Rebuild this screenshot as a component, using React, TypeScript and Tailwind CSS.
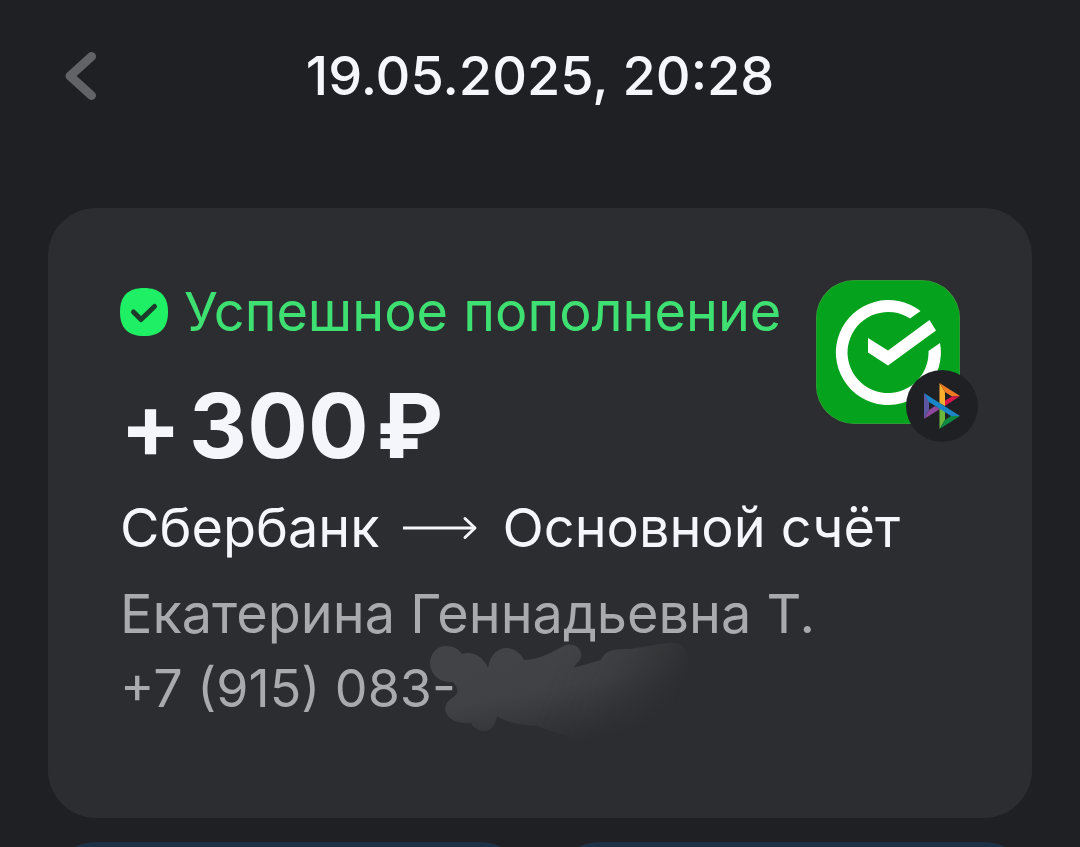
function BackIcon() {
  return (
    <svg className="h-12 w-8" viewBox="0 0 32 48" fill="none" aria-hidden="true">
      <path d="M27.5 4.5 L6 24 L27.5 43.5" stroke="#626367" strokeWidth="9" strokeLinecap="round" strokeLinejoin="round" />
    </svg>
  )
}

function SuccessIcon() {
  return (
    <svg className="size-12 shrink-0" viewBox="0 0 48 48" fill="none" aria-hidden="true">
      <path d="M24 0C40 0 48 8 48 24C48 40 40 48 24 48C8 48 0 40 0 24C0 8 8 0 24 0Z" fill="#1fef64" />
      <path d="M13.5 24 L21 31.5 L34.5 18.5" stroke="#1d3b2a" strokeWidth="5" strokeLinecap="round" strokeLinejoin="round" />
    </svg>
  )
}

function ArrowIcon() {
  return (
    <svg className="h-6 w-[75px] shrink-0" viewBox="0 0 75 24" fill="none" aria-label="на">
      <path d="M0 12 H72" stroke="#f5f6fb" strokeWidth="3" />
      <path d="M62 2.5 L72 12 L62 21.5" stroke="#f5f6fb" strokeWidth="3" strokeLinecap="round" strokeLinejoin="round" />
    </svg>
  )
}

function BankLogo() {
  return (
    <svg className="size-36" viewBox="0 0 144 144" fill="none" role="img" aria-label="Сбербанк">
      <rect width="144" height="144" rx="38" fill="#3c9a3c" />
      <rect x="0.7" y="0.7" width="142.6" height="142.6" rx="37.5" fill="#05a31d" />
      <path d="M104.5 31 A52.5 52.5 0 1 0 124 63 L112.5 71 A40.5 40.5 0 1 1 94 38.5 Z" fill="#fff" />
      <path d="M52 58 L72 70.5 L113.5 40 L120 50.5 L72 85.5 L52 72.5 Z" fill="#fff" />
    </svg>
  )
}

// Fast payments system badge
function SbpBadge() {
  return (
    <svg className="size-[72px]" viewBox="0 0 72 72" fill="none" role="img" aria-label="СБП">
      <circle cx="36" cy="36" r="36" fill="#1f2024" />
      <path d="M18 23 L23 31 V40 L18 49 Z" fill="#5b57a2" />
      <path d="M23 40 L29 36 L34 39 L18 49 Z" fill="#90489c" />
      <path d="M33.5 13 L39 22 V36 L33.5 33 Z" fill="#fbb02d" />
      <path d="M33.5 13 L54 26 L46 26.5 L39 22 Z" fill="#ef7b22" />
      <path d="M54 26 L39 36 V30.500 L46 26.5 Z" fill="#d9174a" />
      <path d="M39 38 V50 L33.5 59 V34 Z" fill="#6cb83f" />
      <path d="M39 50 L45 46 H54 L33.5 59 Z" fill="#0d8a43" />
      <path d="M18 23 L54 46 H45 L23 32 Z" fill="#1b86c7" />
    </svg>
  )
}

function MarkerSmudge() {
  return (
    <svg className="absolute -top-2.5 left-[308px] h-[106px] w-[264px]" viewBox="0 0 264 106" fill="none" aria-hidden="true">
      <defs>
        <linearGradient id="smudge" x1="110" y1="10" x2="130" y2="106" gradientUnits="userSpaceOnUse">
          <stop offset="0" stopColor="#424346" />
          <stop offset="0.4" stopColor="#404144" />
          <stop offset="1" stopColor="#2c2d30" />
        </linearGradient>
        <linearGradient id="smudge-fade" x1="130" y1="20" x2="245" y2="70" gradientUnits="userSpaceOnUse">
          <stop offset="0" stopColor="#fff" />
          <stop offset="0.4" stopColor="#ddd" />
          <stop offset="0.8" stopColor="#555" />
          <stop offset="1" stopColor="#000" />
        </linearGradient>
        <mask id="smudge-mask">
          <rect width="264" height="106" fill="url(#smudge-fade)" />
        </mask>
      </defs>
      <path
        d="M18 5C25 5 31 8 34 13C46 9 56 17 60 27C64 2 88 2 96 19C112 19 125 10 138 4C150 1 158 13 150 21L145 27L173 19C178 8 188 8 202 8L238 2C252 -1 262 8 260 20C265 26 264 34 262 42C255 70 225 95 195 105C165 102 135 96 110 85C96 84 80 83 69 75C66 96 48 92 43 82C18 84 10 66 24 57C31 53 31 48 25 41C10 42 2 32 2 21C3 12 9 5 18 5Z"
        fill="url(#smudge)"
        mask="url(#smudge-mask)"
      />
    </svg>
  )
}

export default function App() {
  return (
    <div className="h-screen overflow-hidden bg-[#1f2024] px-12 font-['Inter',sans-serif] text-[#f5f6fb]">
      <header className="grid grid-cols-[64px_1fr_64px] items-center pt-10">
        <button type="button" aria-label="Назад" className="flex justify-center">
          <BackIcon />
        </button>
        <h1 className="text-center text-[54px] leading-[72px] font-medium">19.05.2025, 20:28</h1>
      </header>

      <main className="pt-24">
        <section className="rounded-[48px] bg-[#2c2d30] px-[72px] pt-[72px] pb-[92px]">
          <div className="flex items-start justify-between">
            <div>
              <div className="flex h-16 items-center gap-4 whitespace-nowrap text-[#3fe072]">
                <SuccessIcon />
                <p className="text-[54px] leading-[64px]">Успешное пополнение</p>
              </div>
              <p className="mt-6 flex gap-2 text-[90px] leading-[116px] font-bold">
                <span>+</span>
                <span>300</span>
                <span>₽</span>
              </p>
            </div>
            <div className="relative shrink-0">
              <BankLogo />
              <div className="absolute top-[90px] left-[90px]">
                <SbpBadge />
              </div>
            </div>
          </div>

          <div className="mt-2 flex items-center gap-6 text-[54px] leading-[72px] whitespace-nowrap">
            <span>Сбербанк</span>
            <ArrowIcon />
            <span>Основной счёт</span>
          </div>

          <div className="mt-3 leading-[75px] whitespace-nowrap text-[#a9aaae]">
            <p className="text-[54px] leading-[75px]">Екатерина Геннадьевна Т.</p>
            <div className="relative">
              <MarkerSmudge />
              <p className="relative text-[52px] leading-[75px]">+7 (915) 083-</p>
            </div>
          </div>
        </section>

        <div className="mt-6 grid grid-cols-2 gap-6">
          <button type="button" aria-label="Повторить" className="h-36 rounded-[48px] bg-[#1d3146]" />
          <button type="button" aria-label="Квитанция" className="h-36 rounded-[48px] bg-[#1d3146]" />
        </div>
      </main>
    </div>
  )
}
